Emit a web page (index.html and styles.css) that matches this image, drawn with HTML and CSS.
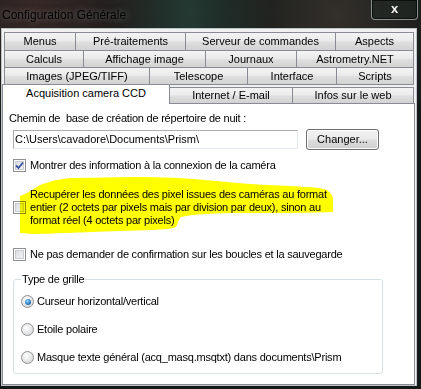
FILE: index.html
```html
<!DOCTYPE html>
<html lang="fr">
<head>
    <meta charset="UTF-8">
    <title>Configuration Générale</title>
    <link rel="stylesheet" href="styles.css">
</head>
<body>
    <div class="titlebar">
        <span class="title">Configuration Générale</span>
        <span class="close">x</span>
    </div>

    <div class="client">
        <div class="tab-row row1">
            <div class="tab">Menus</div>
            <div class="tab">Pré-traitements</div>
            <div class="tab">Serveur de commandes</div>
            <div class="tab">Aspects</div>
        </div>
        <div class="tab-row row2">
            <div class="tab">Calculs</div>
            <div class="tab">Affichage image</div>
            <div class="tab">Journaux</div>
            <div class="tab">Astrometry.NET</div>
        </div>
        <div class="tab-row row3">
            <div class="tab">Images (JPEG/TIFF)</div>
            <div class="tab">Telescope</div>
            <div class="tab">Interface</div>
            <div class="tab">Scripts</div>
        </div>
        <div class="tab-row row4">
            <div class="tab selected">Acquisition camera CCD</div>
            <div class="tab">Internet / E-mail</div>
            <div class="tab">Infos sur le web</div>
        </div>

        <div class="panel">
            <div class="field-label">Chemin de&nbsp; base de création de répertoire de nuit :</div>
            <div class="path-row">
                <div class="textbox">C:\Users\cavadore\Documents\Prism\</div>
                <div class="button">Changer...</div>
            </div>

            <div class="check check-first">
                <span class="box">
                    <svg width="9" height="9" viewBox="0 0 9 9"><path d="M1 4.5 L3.5 7 L8 1.5" fill="none" stroke="#3553a0" stroke-width="1.8"/></svg>
                </span>
                <span>Montrer des information à la connexion de la caméra</span>
            </div>

            <div class="check check-multi">
                <span class="box"></span>
                <span>Recupérer les données des pixel issues des caméras au format<br>entier (2 octets par pixels mais par division par deux), sinon au<br>format réel (4 octets par pixels)</span>
                <!-- marker highlight drawn over the option -->
                <svg class="marker" width="330" height="70" viewBox="13 170 330 70">
                    <path d="M20 196 C26 194 32 190 40 185 C55 180 62 178 75 178 L133 177 C165 177 185 178 205 180 C235 183 260 185 290 186 C305 187 318 187 327 190 C331 193 333 196 333 200 L333 212 C310 213 280 213 240 213 C215 213 195 214 181 217 C178 220 178 224 176 227 C170 230 150 230 120 231 C80 232 50 234 33 234 L20 233 Z" fill="#ffff00"/>
                </svg>
            </div>

            <div class="check check-last">
                <span class="box"></span>
                <span>Ne pas demander de confirmation sur les boucles et la sauvegarde</span>
            </div>

            <fieldset class="group">
                <legend>Type de grille</legend>
                <div class="radio"><span class="dot on"></span><span>Curseur horizontal/vertical</span></div>
                <div class="radio"><span class="dot"></span><span>Etoile polaire</span></div>
                <div class="radio"><span class="dot"></span><span>Masque texte général (acq_masq.msqtxt) dans documents\Prism</span></div>
            </fieldset>
        </div>
    </div>
</body>
</html>
```

FILE: styles.css
```css
* {
    box-sizing: border-box;
}

body {
    margin: 0;
    width: 421px;
    height: 389px;
    overflow: hidden;
    display: flex;
    flex-direction: column;
    font-family: "Liberation Sans", Arial, sans-serif;
    font-size: 11px;
    line-height: 13px;
    color: #000;
    background:
        radial-gradient(ellipse at 8% 2%, rgba(120, 70, 70, 0.35), transparent 25%),
        radial-gradient(ellipse at 45% 3%, rgba(70, 120, 105, 0.35), transparent 25%),
        radial-gradient(ellipse at 80% 4%, rgba(110, 90, 80, 0.35), transparent 25%),
        #141917;
}

.titlebar {
    height: 28px;
    flex: none;
    display: flex;
    justify-content: space-between;
    align-items: flex-start;
}

.title {
    margin: 8px 0 0 2px;
    font-size: 12px;
    line-height: 14px;
    color: #000;
    text-shadow: 0 0 6px rgba(190, 200, 195, 0.45), 0 0 12px rgba(190, 200, 195, 0.25);
}

.close {
    width: 47px;
    height: 20px;
    margin-right: 3px;
    border: 1px solid rgba(190, 200, 198, 0.65);
    border-top: none;
    border-radius: 0 0 4px 4px;
    box-shadow: inset 0 0 0 1px rgba(0, 0, 0, 0.6);
    background: rgba(30, 40, 36, 0.5);
    color: #f4f4f4;
    font-weight: bold;
    font-size: 13px;
    line-height: 17px;
    text-align: center;
}

.client {
    flex: 1;
    margin: 0 4px 3px 1px;
    padding-top: 3px;
    border: 1px solid #bfc6ca;
    background: #f0f0f0;
    display: flex;
    flex-direction: column;
}

/* tab strip */
.tab-row {
    display: grid;
    margin-left: 2px;
    width: 410px;
    margin-bottom: -1px;
}

.row1 { grid-template-columns: 71px 110px 150px 79px; height: 19px; }
.row2 { grid-template-columns: 79px 122px 91px 118px; height: 18px; }
.row3 { grid-template-columns: 145px 98px 89px 78px; height: 18px; }

.row4 {
    grid-template-columns: 167px 123px 122px;
    margin-left: 0;
    margin-bottom: 0;
    width: 412px;
    height: 19px;
    align-items: end;
}

.tab {
    margin-right: -1px;
    border: 1px solid #898c95;
    background: linear-gradient(#f3f3f3, #ebebeb 45%, #dedede 55%, #d2d2d2);
    text-align: center;
    line-height: 16px;
    white-space: nowrap;
}

.tab:last-child {
    margin-right: 0;
}

.row4 .tab {
    height: 16px;
    border-bottom: none;
    line-height: 15px;
}

.row4 .tab.selected {
    position: relative;
    z-index: 2;
    height: 20px;
    margin-bottom: -1px;
    background: #fff;
    line-height: 17px;
}

.panel {
    flex: 1;
    width: 413px;
    border: 1px solid #898c95;
    background: #fff;
    padding: 8px 0 0 10px;
    letter-spacing: -0.22px;
}

.field-label {
    margin-left: -4px;
}

.path-row {
    display: flex;
    align-items: flex-start;
    margin-top: 5px;
}

.textbox {
    width: 285px;
    height: 19px;
    padding: 2px 1px;
    border: 1px solid;
    border-color: #abadb3 #e3e9ef #e3e9ef #abadb3;
    white-space: nowrap;
    letter-spacing: 0;
}

.button {
    width: 73px;
    height: 21px;
    margin: -1px 0 0 8px;
    border: 1px solid #707070;
    border-radius: 3px;
    background: linear-gradient(#f2f2f2, #ebebeb 45%, #dddddd 55%, #cfcfcf);
    box-shadow: inset 0 0 0 1px #fcfcfc;
    text-align: center;
    line-height: 19px;
    letter-spacing: 0;
}

.check {
    display: flex;
    align-items: center;
    gap: 4px;
}

.check-first { margin-top: 9px; }
.check-last { margin-top: 21px; }

.check-multi {
    position: relative;
    margin-top: 16px;
}

.box {
    flex: none;
    width: 13px;
    height: 13px;
    border: 1px solid #8e8f8f;
    background: linear-gradient(135deg, #d6d8db, #f7f7f7);
    box-shadow: inset 0 0 0 1px #fff, inset 0 0 0 2px #c9ccd1;
    display: flex;
    align-items: center;
    justify-content: center;
}

.marker {
    position: absolute;
    left: 0;
    top: -18px;
    mix-blend-mode: multiply;
}

.group {
    width: 370px;
    margin: 12px 0 0 0;
    padding: 9px 7px 9px 7px;
    border: 1px solid #d5dfe5;
    border-radius: 3px;
}

.group legend {
    padding: 0 1px;
}

.radio {
    display: flex;
    align-items: center;
    gap: 3px;
}

.radio + .radio {
    margin-top: 15px;
}

.dot {
    flex: none;
    width: 13px;
    height: 13px;
    border: 1px solid #8e8f8f;
    border-radius: 50%;
    background: radial-gradient(circle at 40% 35%, #ffffff, #d8d9db 80%);
    display: flex;
    align-items: center;
    justify-content: center;
}

.dot.on::after {
    content: "";
    width: 6px;
    height: 6px;
    border-radius: 50%;
    background: radial-gradient(circle at 40% 35%, #9fd8ff, #2a7fc4 55%, #0c3f78);
}
```
